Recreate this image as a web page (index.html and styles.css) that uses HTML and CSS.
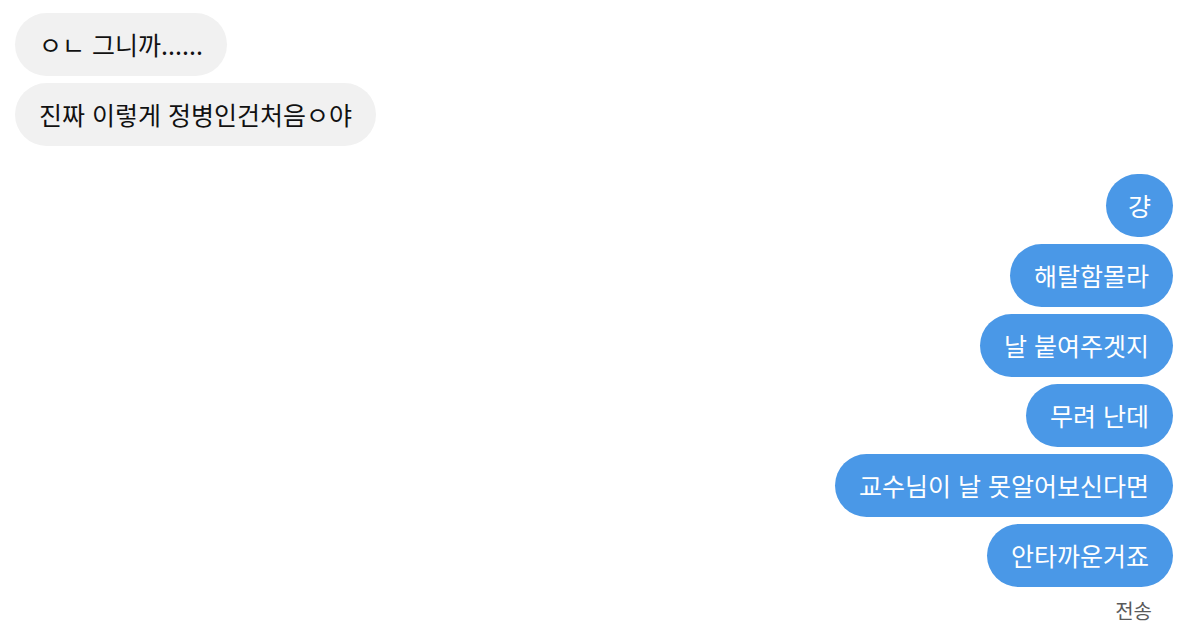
FILE: index.html
```html
<!DOCTYPE html>
<html lang="ko">
<head>
  <meta charset="UTF-8" />
  <title>채팅</title>
  <link rel="stylesheet" href="styles.css">
</head>
<body>
  <div class="chat">
    <div class="group received">
      <div class="bubble">ㅇㄴ 그니까......</div>
      <div class="bubble">진짜 이렇게 정병인건처음ㅇ야</div>
    </div>

    <div class="group sent">
      <div class="bubble round">걍</div>
      <div class="bubble">해탈함몰라</div>
      <div class="bubble">날 붙여주겟지</div>
      <div class="bubble">무려 난데</div>
      <div class="bubble">교수님이 날 못알어보신다면</div>
      <div class="bubble">안타까운거죠</div>
      <div class="status">전송</div>
    </div>
  </div>
</body>
</html>
```

FILE: styles.css
```css
body {
  margin: 0;
  background-color: #fff;
  font-family: "Noto Sans CJK KR", "Noto Sans", sans-serif;
}

.chat {
  padding: 13px 27px 0 15px;
  display: flex;
  flex-direction: column;
  gap: 28px;
}

.group {
  display: flex;
  flex-direction: column;
  gap: 7px;
}

.received {
  align-items: flex-start;
}

.sent {
  align-items: flex-end;
}

.bubble {
  font-size: 25px;
  line-height: 33px;
  padding: 15px 24px;
  border-radius: 32px;
  white-space: nowrap;
}

.received .bubble {
  background-color: #f1f1f1;
  color: #111;
}

.sent .bubble {
  background-color: #4a98e7;
  color: #fff;
}

.sent .bubble.round {
  padding: 15px 22px;
}

.status {
  font-size: 20px;
  line-height: 24px;
  color: #5a5a5a;
  margin-top: 5px;
  margin-right: 21px;
}
```
